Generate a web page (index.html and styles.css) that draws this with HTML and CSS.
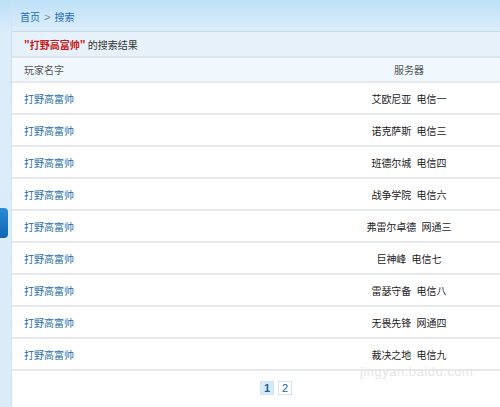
FILE: index.html
```html
<!DOCTYPE html>
<html lang="zh">
<head>
<meta charset="utf-8">
<link rel="stylesheet" href="styles.css">
</head>
<body>
<div class="page">
  <div class="side"><div class="tab"></div></div>
  <div class="main">
    <div class="crumb"><a class="link">首页</a><span class="sep">&gt;</span><a class="link">搜索</a></div>
    <div class="title"><span class="kw">"打野高富帅"</span> 的搜索结果</div>
    <div class="row head"><div class="c1">玩家名字</div><div class="c2">服务器</div></div>
    <div class="row"><div class="c1 name">打野高富帅</div><div class="c2">艾欧尼亚 电信一</div></div>
    <div class="row"><div class="c1 name">打野高富帅</div><div class="c2">诺克萨斯 电信三</div></div>
    <div class="row"><div class="c1 name">打野高富帅</div><div class="c2">班德尔城 电信四</div></div>
    <div class="row"><div class="c1 name">打野高富帅</div><div class="c2">战争学院 电信六</div></div>
    <div class="row"><div class="c1 name">打野高富帅</div><div class="c2">弗雷尔卓德 网通三</div></div>
    <div class="row"><div class="c1 name">打野高富帅</div><div class="c2">巨神峰 电信七</div></div>
    <div class="row"><div class="c1 name">打野高富帅</div><div class="c2">雷瑟守备 电信八</div></div>
    <div class="row"><div class="c1 name">打野高富帅</div><div class="c2">无畏先锋 网通四</div></div>
    <div class="row"><div class="c1 name">打野高富帅</div><div class="c2">裁决之地 电信九</div></div>
    <div class="pager"><span class="pg cur">1</span><span class="pg">2</span></div>
  </div>
</div>
<div class="mark">jingyan.baidu.com</div>
</body>
</html>
```
FILE: styles.css
```css
html, body { margin: 0; padding: 0; }
body {
  width: 500px; height: 407px; overflow: hidden;
  background: linear-gradient(#bcdff7, #dcedfa 34px, #dbecf9);
  font-family: "Noto Sans CJK SC", "Liberation Sans", sans-serif;
  font-size: 10px; color: #333;
  position: relative;
}
.page { display: flex; height: 407px; }
.side { width: 11px; flex: none; padding-top: 208px; box-sizing: border-box; }
.tab { width: 8px; height: 30px; background: linear-gradient(#2a8ad6, #1165b0); border-radius: 0 4px 4px 0; }
.main { flex: 1; background: #fff; display: flex; flex-direction: column; border-left: 1px solid #cfe2f1; }
.crumb {
  height: 32px; box-sizing: border-box; padding: 10px 0 0 8px;
  background: linear-gradient(#bfe1f8, #dbedfa);
  border-bottom: 1px solid #cdd8e2; line-height: 14px;
}
.link { color: #1f6db0; }
.sep { color: #7a8a99; margin: 0 4px; font-family: "Liberation Sans", sans-serif; font-size: 11px; }
.title {
  height: 26px; box-sizing: border-box; padding: 5px 0 0 12px; line-height: 15px;
  background: #e6f1fa; border-bottom: 2px solid #dfe5ea; color: #333;
}
.kw { color: #c41a1a; font-weight: bold; }
.row { display: flex; height: 32px; box-sizing: border-box; border-bottom: 2px solid #e6e9ec; align-items: center; }
.c1 { flex: 1; padding-left: 12px; }
.c2 { width: 182px; text-align: center; word-spacing: 3px; color: #222; }
.row.head { height: 25px; background: #f1f8fd; color: #555; }
.row.head .c2 { color: #555; }
.name { color: #266ca6; }
.pager { display: flex; justify-content: center; gap: 4px; padding: 10px 0 0 40px; }
.pg {
  width: 14px; height: 14px; box-sizing: border-box; border: 1px solid #d3e3f0;
  font-family: "Liberation Sans", sans-serif; font-size: 11px; line-height: 12px; text-align: center; color: #1f5f99;
}
.pg.cur { background: #d6eafa; font-weight: bold; }
.mark {
  position: absolute; left: 360px; top: 364px;
  font-family: "Liberation Sans", sans-serif; font-size: 13px; color: #e4e4e4; letter-spacing: 0.5px;
}
```
